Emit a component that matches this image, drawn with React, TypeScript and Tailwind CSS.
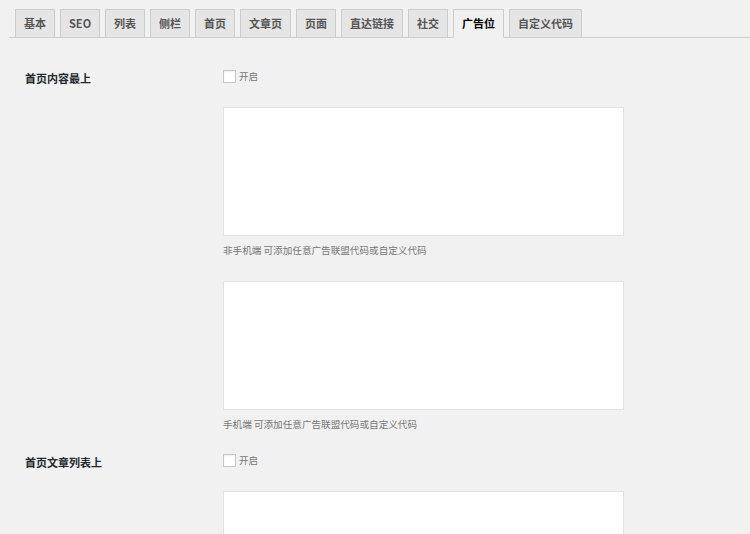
import { useState } from "react";

const tabs = ["基本", "SEO", "列表", "侧栏", "首页", "文章页", "页面", "直达链接", "社交", "广告位", "自定义代码"];

const font = { fontFamily: '"Noto Sans CJK SC", "Noto Sans", sans-serif' };

function AdRow({ title }: { title: string }) {
    const [on, setOn] = useState(false);
    return (
        <div className="flex">
            <div className="w-[198px] shrink-0 pt-[1px] text-[11px] leading-[14px] font-bold text-[#23282d]">{title}</div>
            <div className="flex flex-col">
                <label className="flex items-center h-[13px] gap-[3px] cursor-pointer">
                    <input
                        type="checkbox"
                        checked={on}
                        onChange={() => setOn(!on)}
                        className="appearance-none w-[13px] h-[13px] m-0 bg-white border border-[#c3c7cb] shadow-[inset_0_1px_2px_rgba(0,0,0,0.07)]"
                    />
                    <span className="text-[9.5px] leading-[13px] text-[#777]">开启</span>
                </label>
                <textarea className="mt-[24px] w-[401px] h-[129px] bg-white border border-[#e2e2e2] resize-none outline-none" />
                <p className="mt-[7px] text-[9.6px] leading-[14px] text-[#777]">非手机端 可添加任意广告联盟代码或自定义代码</p>
                <textarea className="mt-[24px] w-[401px] h-[129px] bg-white border border-[#e2e2e2] resize-none outline-none" />
                <p className="mt-[7px] text-[9.6px] leading-[14px] text-[#777]">手机端 可添加任意广告联盟代码或自定义代码</p>
            </div>
        </div>
    );
}

export default function App() {
    const [active, setActive] = useState("广告位");

    return (
        <div className="h-screen overflow-hidden bg-[#f1f1f1]" style={font}>
            <div className="flex ml-[9px] pt-[9px] pl-[6px] gap-[5px] border-b border-[#ccc]">
                {tabs.map((t) => (
                    <button
                        key={t}
                        onClick={() => setActive(t)}
                        className={
                            t === active
                                ? "-mb-px h-[29px] px-[8px] border border-[#ccc] border-b-[#f1f1f1] bg-[#f1f1f1] text-[11px] leading-[27px] font-semibold text-black"
                                : "-mb-px h-[29px] px-[8px] border border-[#ccc] bg-[#e5e5e5] text-[11px] leading-[27px] font-semibold text-[#555]"
                        }
                    >
                        {t}
                    </button>
                ))}
            </div>

            <div className="flex flex-col pl-[25px] pt-[32px] gap-[23px]">
                <AdRow title="首页内容最上" />
                <AdRow title="首页文章列表上" />
            </div>
        </div>
    );
}
